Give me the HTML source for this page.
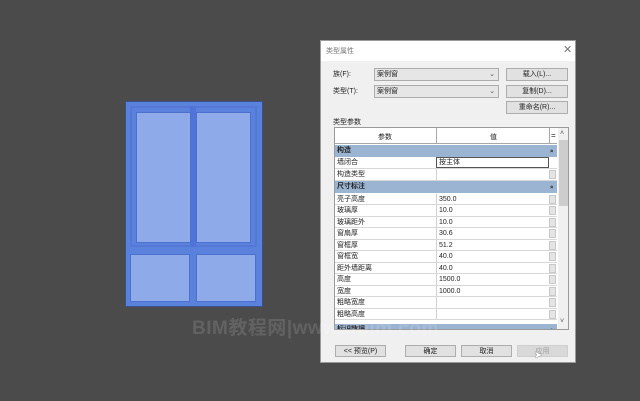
<!DOCTYPE html>
<html><head><meta charset="utf-8"><style>
*{margin:0;padding:0;box-sizing:border-box}
body{width:640px;height:401px;background:#4b4b4b;position:relative;overflow:hidden;font-family:"Liberation Sans","Noto Sans CJK SC",sans-serif;font-size:7.5px;color:#222}
.a{position:absolute}
.win{background:#5a82dc;border:1px solid #3b4f8a}
.pane{background:#8eaae8;border:1px solid #4c70cc}
.dlg{left:320px;top:40px;width:256px;height:323px;background:#f0f0f0;border:1px solid #9a9a9a}
.btn{background:#e1e1e1;border:1px solid #adadad;text-align:center;line-height:11px;font-size:7px}
.cb{background:#e6e6e6;border:1px solid #acacac;line-height:11px;padding-left:2px;font-size:7px}
.row{position:absolute;left:0;width:222px;height:11.6px;border-bottom:1px solid #d8d8d8;background:#fff;line-height:11px;font-size:7px}
.row span{position:absolute;left:2px}
.row i{position:absolute;left:104px;font-style:normal}
.row:before{content:"";position:absolute;left:101px;top:0;bottom:0;border-left:1px solid #d0d0d0}
.row b{position:absolute;right:1px;top:1px;width:7px;height:9px;background:#e4e4e4;border:1px solid #c8c8c8}
.grp{position:absolute;left:0;width:222px;height:12px;background:#9ab4d2;line-height:12px;font-size:7px;font-weight:bold;padding-left:2px}
.grp:after{content:"»";position:absolute;right:3px;transform:rotate(-90deg);font-size:6px}
</style></head><body>
<div class="a win" style="left:125px;top:101px;width:138px;height:206px"></div>
<div class="a" style="left:130px;top:106px;width:127px;height:141px;border:2px solid #5578d6;background:#5a82dc"></div>
<div class="a" style="left:190px;top:106px;width:6px;height:141px;background:#4d74d6"></div>
<div class="a pane" style="left:136px;top:112px;width:55px;height:131px"></div>
<div class="a pane" style="left:196px;top:112px;width:55px;height:131px"></div>
<div class="a pane" style="left:130px;top:254px;width:60px;height:48px"></div>
<div class="a pane" style="left:196px;top:254px;width:60px;height:48px"></div>

<div class="a dlg">
 <div class="a" style="left:0;top:0;width:254px;height:20px;background:#fff"></div>
 <div class="a" style="left:5px;top:5px;font-size:7px;color:#777">类型属性</div>
 <div class="a" style="left:242px;top:2px;font-size:11px;color:#777">✕</div>
 <div class="a" style="left:12px;top:28px;font-size:7px">族(F):</div>
 <div class="a" style="left:12px;top:45px;font-size:7px">类型(T):</div>
 <div class="a cb" style="left:53px;top:27px;width:125px;height:13px">案例窗<span style="position:absolute;right:3px;color:#555">⌄</span></div>
 <div class="a cb" style="left:53px;top:44px;width:125px;height:13px">案例窗<span style="position:absolute;right:3px;color:#555">⌄</span></div>
 <div class="a btn" style="left:185px;top:27px;width:62px;height:13px">载入(L)...</div>
 <div class="a btn" style="left:185px;top:44px;width:62px;height:13px">复制(D)...</div>
 <div class="a btn" style="left:185px;top:60px;width:62px;height:13px">重命名(R)...</div>
 <div class="a" style="left:12px;top:76px;font-size:7px">类型参数</div>
 <div class="a" style="left:13px;top:86px;width:235px;height:203px;background:#fff;border:1px solid #9a9a9a;overflow:hidden">
  <div class="a" style="left:0;top:0;width:222px;height:16px;background:#fff;border-bottom:1px solid #a8a8a8"></div>
  <div class="a" style="left:101px;top:0;height:16px;border-left:1px solid #a8a8a8"></div>
  <div class="a" style="left:214px;top:0;height:16px;border-left:1px solid #a8a8a8"></div>
  <div class="a" style="left:43px;top:4px;font-size:7px">参数</div>
  <div class="a" style="left:155px;top:4px;font-size:7px">值</div>
  <div class="a" style="left:216px;top:3px;font-size:8px">=</div>
  <div class="grp" style="top:17px">构造</div>
  <div class="row" style="top:29px"><span>墙闭合</span><i>按主体</i><div class="a" style="left:101px;top:0;width:113px;height:11px;border:1px solid #555"></div></div>
  <div class="row" style="top:41px"><span>构造类型</span><b></b></div>
  <div class="grp" style="top:53px">尺寸标注</div>
  <div class="row" style="top:65.5px"><span>亮子高度</span><i>350.0</i><b></b></div>
  <div class="row" style="top:77px"><span>玻璃厚</span><i>10.0</i><b></b></div>
  <div class="row" style="top:88.5px"><span>玻璃距外</span><i>10.0</i><b></b></div>
  <div class="row" style="top:100px"><span>窗扇厚</span><i>30.6</i><b></b></div>
  <div class="row" style="top:111.5px"><span>窗框厚</span><i>51.2</i><b></b></div>
  <div class="row" style="top:123px"><span>窗框宽</span><i>40.0</i><b></b></div>
  <div class="row" style="top:134.5px"><span>距外墙距离</span><i>40.0</i><b></b></div>
  <div class="row" style="top:146px"><span>高度</span><i>1500.0</i><b></b></div>
  <div class="row" style="top:157.5px"><span>宽度</span><i>1000.0</i><b></b></div>
  <div class="row" style="top:169px"><span>粗略宽度</span><b></b></div>
  <div class="row" style="top:180.5px"><span>粗略高度</span><b></b></div>
  <div class="grp" style="top:196px">标识数据</div>
  <div class="a" style="left:223px;top:0;width:11px;height:203px;background:#f0f0f0"></div>
  <div class="a" style="left:225px;top:2px;font-size:7px;color:#555">˄</div>
  <div class="a" style="left:224px;top:12px;width:9px;height:66px;background:#cdcdcd"></div>
  <div class="a" style="left:225px;top:190px;font-size:7px;color:#555">˅</div>
 </div>
 <div class="a btn" style="left:14px;top:304px;width:51px;height:12px">&lt;&lt; 预览(P)</div>
 <div class="a btn" style="left:84px;top:304px;width:51px;height:12px">确定</div>
 <div class="a btn" style="left:140px;top:304px;width:51px;height:12px">取消</div>
 <div class="a btn" style="left:196px;top:304px;width:51px;height:12px;color:#a0a0a0;border-color:#cfcfcf;background:#d9d9d9">应用</div>
 <div class="a" style="left:213px;top:309px;font-size:10px;color:#fff;text-shadow:0 0 1px #000">➤</div>
</div>
<div class="a" style="left:192px;top:313px;font-size:19px;font-weight:bold;color:rgba(255,255,255,0.13);white-space:nowrap;letter-spacing:0.5px;z-index:5">BIM教程网|www.tfbim.com</div>
</body></html>
